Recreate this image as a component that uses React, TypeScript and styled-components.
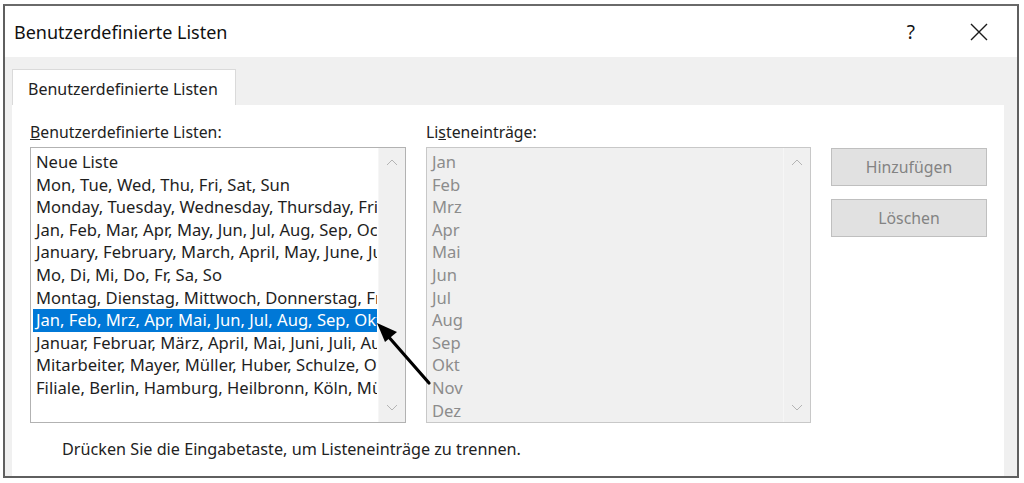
import styled, { createGlobalStyle } from "styled-components"

const GlobalStyle = createGlobalStyle`
  html, body {
    margin: 0;
    padding: 0;
    background: #ffffff;
    font-family: "Noto Sans", "Open Sans", sans-serif;
  }
`

const customLists = [
  "Neue Liste",
  "Mon, Tue, Wed, Thu, Fri, Sat, Sun",
  "Monday, Tuesday, Wednesday, Thursday, Friday, Saturday, Sunday",
  "Jan, Feb, Mar, Apr, May, Jun, Jul, Aug, Sep, Oct, Nov, Dec",
  "January, February, March, April, May, June, July, August",
  "Mo, Di, Mi, Do, Fr, Sa, So",
  "Montag, Dienstag, Mittwoch, Donnerstag, Freitag, Samstag",
  "Jan, Feb, Mrz, Apr, Mai, Jun, Jul, Aug, Sep, Okt, Nov, Dez",
  "Januar, Februar, März, April, Mai, Juni, Juli, August",
  "Mitarbeiter, Mayer, Müller, Huber, Schulze, Otto",
  "Filiale, Berlin, Hamburg, Heilbronn, Köln, München",
]

const entries = ["Jan", "Feb", "Mrz", "Apr", "Mai", "Jun", "Jul", "Aug", "Sep", "Okt", "Nov", "Dez"]

const SELECTED = 7

function Chevron({ up }: { up?: boolean }) {
  return (
    <svg width="12" height="8" viewBox="0 0 12 8">
      <path
        d={up ? "M1 7 L6 2 L11 7" : "M1 1 L6 6 L11 1"}
        fill="none"
        stroke="#b4b4b4"
        strokeWidth="1"
      />
    </svg>
  )
}

function ScrollBar() {
  return (
    <Scroll>
      <Chevron up />
      <Chevron />
    </Scroll>
  )
}

export default function App() {
  return (
    <>
      <GlobalStyle />
      <Page>
        <Dialog>
          <TitleBar>
            <Title>Benutzerdefinierte Listen</Title>
            <TitleButtons>
              <Help>?</Help>
              <svg width="18" height="18" viewBox="0 0 18 18">
                <path d="M1 1 L17 17 M17 1 L1 17" stroke="#1a1a1a" strokeWidth="1.4" />
              </svg>
            </TitleButtons>
          </TitleBar>
          <Body>
            <TabStrip>
              <Tab>Benutzerdefinierte Listen</Tab>
            </TabStrip>
            <TabPanel>
              <Columns>
                <Column>
                  <Label><u>B</u>enutzerdefinierte Listen:</Label>
                  <ListBox>
                    <Items>
                      {customLists.map((item, i) => (
                        <Item key={item} selected={i === SELECTED}>{item}</Item>
                      ))}
                    </Items>
                    <ScrollBar />
                  </ListBox>
                </Column>
                <Column>
                  <Label>Li<u>s</u>teneinträge:</Label>
                  <ListBox disabled>
                    <Items>
                      {entries.map(e => (
                        <Item key={e} disabled>{e}</Item>
                      ))}
                    </Items>
                    <ScrollBar />
                  </ListBox>
                </Column>
                <Buttons>
                  <Button>Hinzufügen</Button>
                  <Button>Löschen</Button>
                </Buttons>
              </Columns>
              <Hint>Drücken Sie die Eingabetaste, um Listeneinträge zu trennen.</Hint>
            </TabPanel>
          </Body>
          <Arrow width="60" height="66" viewBox="0 0 60 66">
            <line x1="54" y1="62" x2="12" y2="14" stroke="#000" strokeWidth="3.2" strokeLinecap="round" />
            <polygon points="2,2 22,11 10,21" fill="#000" />
          </Arrow>
        </Dialog>
      </Page>
    </>
  )
}

const Page = styled.div`
  width: 1024px;
  height: 483px;
  padding: 4px 0 0 3px;
  box-sizing: border-box;
`

const Dialog = styled.div`
  position: relative;
  width: 1016px;
  height: 474px;
  box-sizing: border-box;
  border: 2px solid #5f5f5f;
  border-top-color: #6a6a6a;
  display: flex;
  flex-direction: column;
  background: #f0f0f0;
`

const TitleBar = styled.div`
  height: 51px;
  background: #ffffff;
  display: flex;
  align-items: center;
  justify-content: space-between;
  padding: 0 29px 0 9px;
  flex-shrink: 0;
`

const Title = styled.span`
  font-size: 18px;
  color: #111;
  margin-top: 1px;
`

const TitleButtons = styled.div`
  display: flex;
  align-items: center;
  gap: 55px;
`

const Help = styled.span`
  font-size: 19px;
  color: #111;
`

const Body = styled.div`
  flex: 1;
  display: flex;
  flex-direction: column;
  padding: 12px 13px 0 7px;
  min-height: 0;
`

const TabStrip = styled.div`
  display: flex;
  height: 36px;
`

const Tab = styled.div`
  width: 224px;
  box-sizing: border-box;
  background: #ffffff;
  border: 1px solid #dadada;
  border-bottom: none;
  font-size: 16px;
  color: #222;
  padding: 8px 0 0 15px;
`

const TabPanel = styled.div`
  flex: 1;
  background: #ffffff;
  padding: 16px 0 0 18px;
  display: flex;
  flex-direction: column;
`

const Columns = styled.div`
  display: grid;
  grid-template-columns: 376px 385px 156px;
  column-gap: 20px;
  align-items: start;
`

const Column = styled.div`
  display: flex;
  flex-direction: column;
`

const Label = styled.div`
  font-size: 15.8px;
  color: #222;
  height: 26px;
  line-height: 22px;
`

const ListBox = styled.div<{ disabled?: boolean }>`
  height: 276px;
  box-sizing: border-box;
  border: 1px solid ${({ disabled }) => (disabled ? "#c8c8c8" : "#b2b2b2")};
  background: ${({ disabled }) => (disabled ? "#f0f0f0" : "#ffffff")};
  display: flex;
  overflow: hidden;
`

const Items = styled.div`
  flex: 1;
  padding: 3px 1px 0 2px;
  min-width: 0;
`

const Item = styled.div<{ selected?: boolean; disabled?: boolean }>`
  height: 22.6px;
  line-height: 22.6px;
  padding-left: 3px;
  font-size: 16.6px;
  white-space: nowrap;
  overflow: hidden;
  color: ${({ selected, disabled }) => (selected ? "#ffffff" : disabled ? "#8c8c8c" : "#1e1e1e")};
  background: ${({ selected }) => (selected ? "#0078d7" : "transparent")};
`

const Scroll = styled.div`
  width: 26px;
  flex-shrink: 0;
  background: #f0f0f0;
  border-left: 1px solid #f6f6f6;
  display: flex;
  flex-direction: column;
  justify-content: space-between;
  align-items: center;
  padding: 10px 0 10px;
`

const Buttons = styled.div`
  display: flex;
  flex-direction: column;
  gap: 13px;
  padding-top: 27px;
`

const Button = styled.div`
  height: 38px;
  box-sizing: border-box;
  border: 1px solid #bfbfbf;
  background: #e1e1e1;
  color: #838383;
  font-size: 15.8px;
  display: flex;
  align-items: center;
  justify-content: center;
`

const Hint = styled.div`
  font-size: 16.2px;
  color: #222;
  padding: 15px 0 0 32px;
`

const Arrow = styled.svg`
  position: absolute;
  left: 370px;
  top: 315px;
`
